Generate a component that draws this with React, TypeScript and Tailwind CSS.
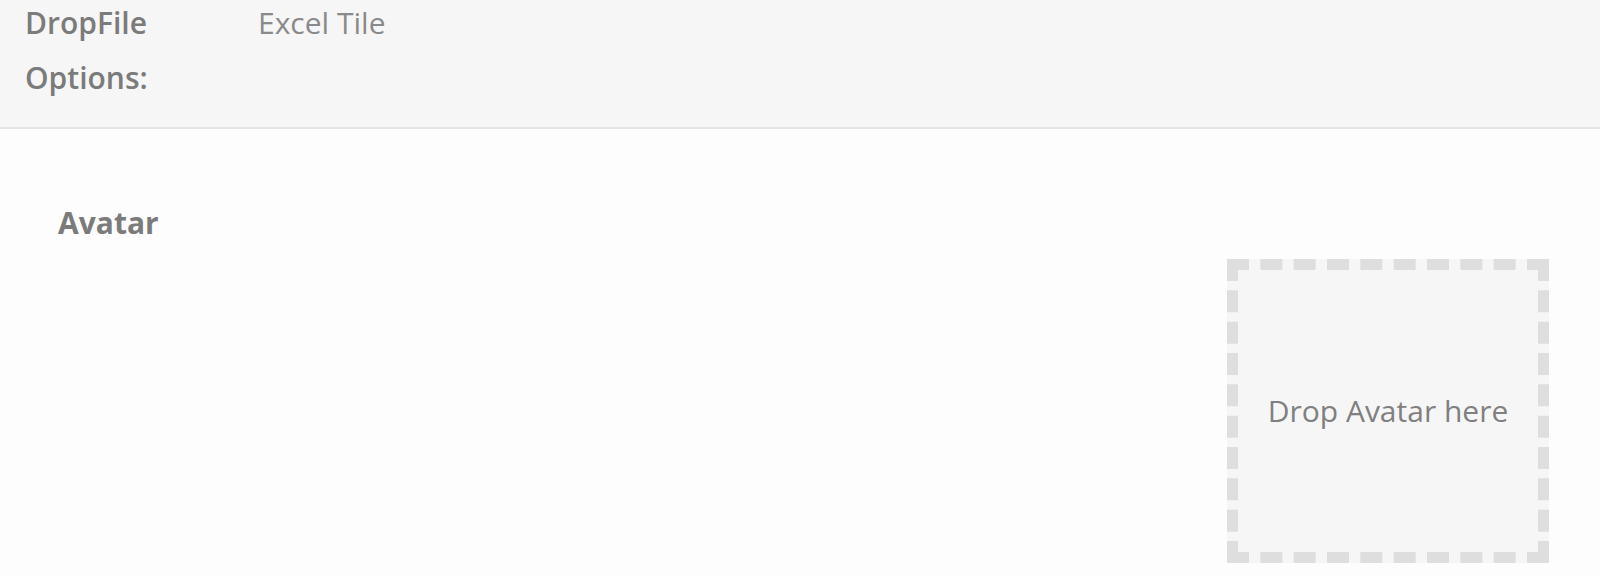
export default function App() {
  return (
    <div
      className="h-[576px] w-[1600px] overflow-hidden bg-[#fdfdfd] text-[#7b7b7b]"
      style={{ fontFamily: '"Open Sans", "Liberation Sans", sans-serif' }}
    >
      {/* Header: options row */}
      <div className="flex h-[129px] border-b-2 border-[#e4e4e4] bg-[#f6f6f6] pl-[25px]">
        <div className="mt-[-5px] w-[233px] shrink-0">
          <div className="w-[150px] text-[30px] font-semibold leading-[55px]">DropFile Options:</div>
        </div>
        <div className="mt-[-5px] text-[30px] leading-[55px] text-[#8a8a8a]">Excel Tile</div>
      </div>

      {/* Body */}
      <div className="pl-[58px] pr-[51px] pt-[74px]">
        <div className="text-[30px] font-bold leading-[40px]">Avatar</div>
        <div className="mt-[16px] flex justify-end">
          <div className="flex h-[304px] w-[322px] items-center justify-center border-[11px] border-dashed border-[#dedede] bg-[#f6f6f6]">
            <span className="text-[30px] leading-[40px] text-[#808080]">Drop Avatar here</span>
          </div>
        </div>
      </div>
    </div>
  );
}
